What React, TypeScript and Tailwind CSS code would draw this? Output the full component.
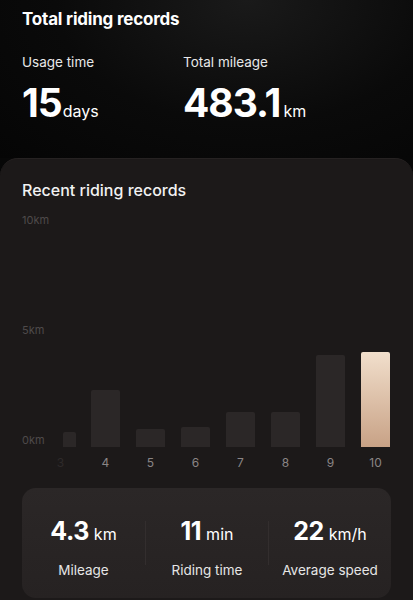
const bars = [
  { day: '3', km: 0.7 },
  { day: '4', km: 2.6 },
  { day: '5', km: 0.8 },
  { day: '6', km: 0.9 },
  { day: '7', km: 1.6 },
  { day: '8', km: 1.6 },
  { day: '9', km: 4.2 },
  { day: '10', km: 4.3 },
]

const stats = [
  { value: '4.3', unit: 'km', label: 'Mileage' },
  { value: '11', unit: 'min', label: 'Riding time' },
  { value: '22', unit: 'km/h', label: 'Average speed' },
]

const CHART_H = 220 // 10km

export default function App() {
  return (
    <div
      className="w-[413px] h-[600px] overflow-hidden bg-[#070707] text-white"
      style={{ fontFamily: 'Inter, "Liberation Sans", sans-serif' }}
    >
      <div className="bg-[radial-gradient(ellipse_at_60%_0%,#1a1a1a_0%,#0a0a0a_55%,#050505_100%)] px-[22px] pt-[8px] h-[158px]">
        <h1 className="text-[17px] font-bold leading-[22px] tracking-[-0.2px]">Total riding records</h1>
        <div className="flex mt-[23px]">
          <div className="w-[161px]">
            <p className="text-[13.5px] leading-[18px] text-[#e8e8e8]">Usage time</p>
            <p className="mt-[12px] flex items-baseline">
              <span className="text-[39px] font-bold leading-[40px] tracking-[-1px]">15</span>
              <span className="text-[16px] ml-[1px]">days</span>
            </p>
          </div>
          <div>
            <p className="text-[13.5px] leading-[18px] text-[#e8e8e8]">Total mileage</p>
            <p className="mt-[12px] flex items-baseline">
              <span className="text-[39px] font-bold leading-[40px] tracking-[-1px]">483.1</span>
              <span className="text-[16px] ml-[3px]">km</span>
            </p>
          </div>
        </div>
      </div>

      <div className="bg-[#1c1919] rounded-t-[18px] h-[442px] px-[22px] pt-[20px] border-t border-[#262222]">
        <h2 className="text-[16px] leading-[22px] font-medium text-[#f2f2f2]">Recent riding records</h2>

        <div className="relative mt-[19px] h-[240px]">
          <div className="absolute left-0 top-[-7px] text-[11px] leading-[14px] text-[#4e4a4a]">10km</div>
          <div className="absolute left-0 top-[103px] text-[11px] leading-[14px] text-[#4e4a4a]">5km</div>
          <div className="absolute left-0 top-[213px] text-[11px] leading-[14px] text-[#4e4a4a]">0km</div>

          <div className="absolute left-[24px] right-0 top-[7px] h-[220px] flex items-end overflow-hidden">
            {bars.map((b, i) => {
              const last = i === bars.length - 1
              return (
                <div
                  key={b.day}
                  className={`shrink-0 ${i === 0 ? 'w-[13px] ml-[17px] mr-[15px]' : 'w-[29px] mr-[16px]'} ${
                    last
                      ? 'bg-gradient-to-b from-[#f1dfcc] to-[#c8a286] rounded-t-[2px]'
                      : 'bg-[#2b2727] rounded-t-[2px]'
                  }`}
                  style={{ height: (b.km / 10) * CHART_H }}
                />
              )
            })}
          </div>

          <div className="absolute left-[24px] right-0 top-[236px] flex">
            {bars.map((b, i) => (
              <div
                key={b.day}
                className={`shrink-0 w-[29px] mr-[16px] text-center text-[12px] leading-[14px] ${
                  i === 0 ? 'text-[#2e2a2a]' : 'text-[#8a8585]'
                }`}
              >
                {b.day}
              </div>
            ))}
          </div>
        </div>

        <div className="mt-[28px] rounded-[14px] bg-gradient-to-b from-[#2b2727] to-[#262222] h-[110px] flex items-stretch">
          {stats.map((s, i) => (
            <div key={s.label} className="flex-1 flex items-center">
              {i > 0 && <div className="w-px h-[44px] bg-[#332e2e]" />}
              <div className="flex-1 flex flex-col items-center pt-[28px] h-full">
                <p className="flex items-baseline">
                  <span className="text-[25px] font-bold leading-[30px] tracking-[-0.5px]">{s.value}</span>
                  <span className="text-[16px] ml-[5px]">{s.unit}</span>
                </p>
                <p className="mt-[15px] text-[13.5px] leading-[18px] text-[#e6e6e6]">{s.label}</p>
              </div>
            </div>
          ))}
        </div>
      </div>
    </div>
  )
}
